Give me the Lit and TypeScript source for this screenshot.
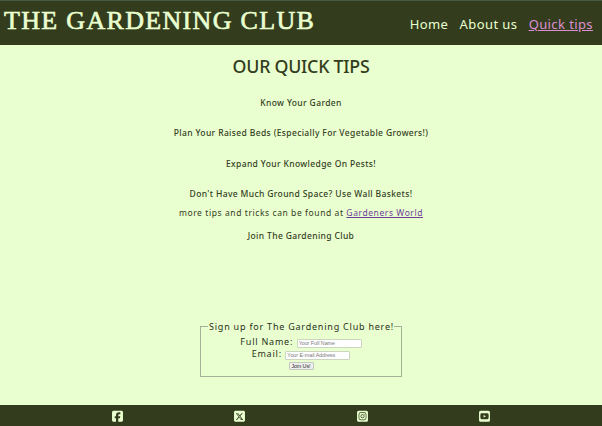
import { LitElement, html, css, svg } from "lit";
import { customElement } from "lit/decorators.js";

@customElement("app-root")
export class AppRoot extends LitElement {
  static styles = css`
    :host {
      display: flex;
      flex-direction: column;
      height: 426px;
      box-sizing: border-box;
      overflow: hidden;
      background: #eaffd0;
      color: #333d1d;
      font-family: "Noto Sans", "Open Sans", sans-serif;
      white-space: nowrap;
    }
    header {
      display: flex;
      justify-content: space-between;
      height: 45px;
      box-sizing: border-box;
      border-top: 1px solid #465a45;
      background: #333d1d;
      padding: 0 9px 0 4px;
      color: #eaffd0;
    }
    .brand {
      font: 24.5px/40px "Liberation Serif", serif;
      letter-spacing: 1.25px;
      -webkit-text-stroke: 0.6px #eaffd0;
      transform: scaleX(1.061);
      transform-origin: left;
    }
    nav {
      display: flex;
      gap: 11.3px;
      font-size: 13px;
      line-height: 46px;
      letter-spacing: 0.4px;
    }
    nav .current {
      color: #dd8fd3;
      text-decoration: underline;
    }
    main {
      flex: 1;
      display: flex;
      flex-direction: column;
      align-items: center;
      text-align: center;
      font-size: 8.5px;
    }
    h1 {
      margin: 9px 0 0;
      font-size: 17.8px;
      line-height: 25px;
      font-weight: 500;
      letter-spacing: -0.25px;
    }
    .tip {
      margin: 17px 0 0;
      line-height: 14px;
      font-weight: 500;
      letter-spacing: 0.37px;
    }
    .tip + .tip {
      margin-top: 16.4px;
    }
    .more {
      line-height: 14px;
      margin: 5px 0 0;
      letter-spacing: 0.58px;
    }
    .more a {
      color: #6b3f98;
      text-decoration: underline;
    }
    .join {
      margin: 9px 0 0;
      line-height: 14px;
      font-weight: 500;
      letter-spacing: 0.37px;
    }
    fieldset {
      width: 202px;
      height: 57px;
      box-sizing: border-box;
      margin: 77px 0 0;
      padding: 3px 0 0;
      border: 1px solid #a4b197;
      font-size: 9px;
      color: #28301a;
      letter-spacing: 0.78px;
    }
    legend {
      margin: 0 auto;
      padding: 0 0 0 1px;
      height: 12px;
      line-height: 14px;
    }
    .row {
      display: flex;
      justify-content: center;
      align-items: center;
      gap: 3.5px;
      height: 12px;
      line-height: 12px;
      position: relative;
      top: 1px;
    }
    input {
      width: 65px;
      height: 9px;
      box-sizing: border-box;
      margin: 2px 0 0;
      padding: 0 1px;
      border: 1px solid #cbd5bf;
      border-radius: 1px;
      background: #fff;
      font: 5.3px/7px "Liberation Sans", sans-serif;
    }
    input::placeholder {
      color: #777;
    }
    button {
      width: 25px;
      height: 8px;
      box-sizing: border-box;
      padding: 0;
      border: 1px solid #c3c9bf;
      border-radius: 1px;
      background: #efefef;
      color: #222;
      font: 5.3px/6px "Liberation Sans", sans-serif;
    }
    footer {
      display: flex;
      justify-content: space-around;
      align-items: center;
      height: 21px;
      box-sizing: border-box;
      background: #333d1d;
      padding: 2px 56px 0;
    }
    footer svg {
      width: 11px;
      height: 12.5px;
      fill: #eaffd0;
    }
  `;

  private icons = [
    svg`<path d="M64 32C28.700 32 0 60.700 0 96V416c0 35.300 28.700 64 64 64h98.200V334.200H109.400V256h52.800V222.300c0-87.100 39.400-127.500 125-127.500 16.200 0 44.200 3.200 55.700 6.400V172c-6-.6-16.500-1-29.600-1-42 0-58.200 15.900-58.200 57.200V256h83.600l-14.400 78.200H255V480H384c35.300 0 64-28.700 64-64V96c0-35.300-28.700-64-64-64Z"/>`,
    svg`<path fill-rule="evenodd" d="M64 32C28.700 32 0 60.700 0 96V416c0 35.300 28.700 64 64 64H384c35.300 0 64-28.700 64-64V96c0-35.300-28.700-64-64-64ZM361 128 257 247 379 408H283L208 310 122 408H75L186 281 69 128H167L235 218 313 128ZM318 380 149 155H120L291 380Z"/>`,
    svg`<path fill-rule="evenodd" d="M64 32H384a64 64 0 0 1 64 64V416a64 64 0 0 1-64 64H64a64 64 0 0 1-64-64V96a64 64 0 0 1 64-64ZM152 97a88 88 0 0 0-88 88V327a88 88 0 0 0 88 88H296a88 88 0 0 0 88-88V185a88 88 0 0 0-88-88ZM152 126H296a59 59 0 0 1 59 59V327a59 59 0 0 1-59 59H152a59 59 0 0 1-59-59V185a59 59 0 0 1 59-59ZM224 174a82 82 0 1 0 0 164 82 82 0 1 0 0-164ZM224 203a53 53 0 1 1 0 106 53 53 0 1 1 0-106ZM309 151a19 19 0 1 0 0 38 19 19 0 1 0 0-38Z"/>`,
    svg`<path fill-rule="evenodd" d="M64 32H384a64 64 0 0 1 64 64V416a64 64 0 0 1-64 64H64a64 64 0 0 1-64-64V96a64 64 0 0 1 64-64ZM100 137Q61 142 57 180 50 256 57 332 61 370 100 375 224 389 348 375 387 370 391 332 398 256 391 180 387 142 348 137 224 123 100 137ZM187 200 285 256 187 312Z"/>`,
  ];

  render() {
    return html`
      <header>
        <div class="brand">THE GARDENING CLUB</div>
        <nav>
          <span>Home</span><span>About us</span><span class="current">Quick tips</span>
        </nav>
      </header>
      <main>
        <h1>OUR QUICK TIPS</h1>
        <p class="tip">Know Your Garden</p>
        <p class="tip">Plan Your Raised Beds (Especially For Vegetable Growers!)</p>
        <p class="tip">Expand Your Knowledge On Pests!</p>
        <p class="tip">Don't Have Much Ground Space? Use Wall Baskets!</p>
        <p class="more">more tips and tricks can be found at <a>Gardeners World</a></p>
        <p class="join">Join The Gardening Club</p>
        <fieldset>
          <legend>Sign up for The Gardening Club here!</legend>
          <div class="row"><label>Full Name:</label><input placeholder="Your Full Name" /></div>
          <div class="row"><label>Email:</label><input placeholder="Your E-mail Address" /></div>
          <div class="row"><button>Join Us!</button></div>
        </fieldset>
      </main>
      <footer>
        ${this.icons.map((icon) => html`<svg viewBox="0 0 448 512">${icon}</svg>`)}
      </footer>
    `;
  }
}
